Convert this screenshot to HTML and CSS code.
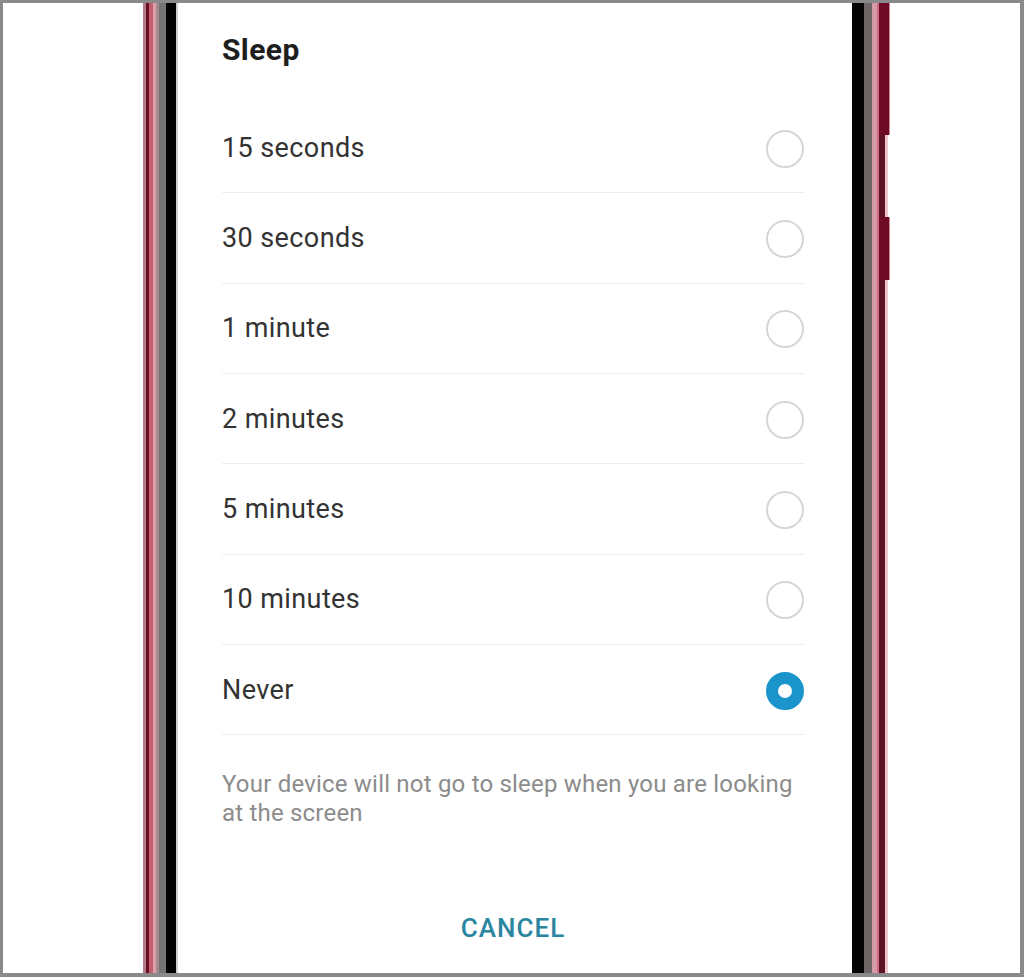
FILE: index.html
```html
<!DOCTYPE html>
<html lang="en">
<head>
<meta charset="utf-8">
<title>Sleep</title>
<link rel="stylesheet" href="styles.css">
</head>
<body>
<div class="frame">
  <div class="margin-left"></div>
  <div class="bezel-left"></div>
  <main class="screen">
    <h1 class="title">Sleep</h1>
    <ul class="options">
      <li class="option"><span class="label">15 seconds</span><span class="radio"></span></li>
      <li class="option"><span class="label">30 seconds</span><span class="radio"></span></li>
      <li class="option"><span class="label">1 minute</span><span class="radio"></span></li>
      <li class="option"><span class="label">2 minutes</span><span class="radio"></span></li>
      <li class="option"><span class="label">5 minutes</span><span class="radio"></span></li>
      <li class="option"><span class="label">10 minutes</span><span class="radio"></span></li>
      <li class="option"><span class="label">Never</span><span class="radio checked"></span></li>
    </ul>
    <p class="note">Your device will not go to sleep when you are looking at the screen</p>
    <div class="actions"><button class="cancel" type="button">CANCEL</button></div>
  </main>
  <div class="bezel-right">
    <div class="band band-black"></div>
    <div class="band band-gray"></div>
    <div class="band band-pink"></div>
    <div class="rail">
      <div class="rail-seg key" style="height:132px"></div>
      <div class="rail-seg plain" style="height:82px"></div>
      <div class="rail-seg key" style="height:63px"></div>
      <div class="rail-seg plain rest"></div>
    </div>
  </div>
  <div class="margin-right"></div>
</div>
</body>
</html>
```

FILE: styles.css
```css
* { box-sizing: border-box; }

html, body {
  margin: 0;
  padding: 0;
  width: 1024px;
  height: 977px;
  overflow: hidden;
  background: #ffffff;
  font-family: Roboto, "Noto Sans", "Liberation Sans", sans-serif;
}

/* outer picture border */
.frame {
  display: flex;
  width: 1024px;
  height: 977px;
  border-style: solid;
  border-color: #8a8a8a;
  border-width: 3px 4px 4px 3px;
  background: #ffffff;
}

.margin-left { width: 140px; flex: none; }
.margin-right { flex: 1; }

/* phone body, left edge */
.bezel-left {
  width: 35px;
  flex: none;
  background: linear-gradient(to right,
    #b27a85 0, #b27a85 3px,
    #6a0c22 3px, #6a0c22 6px,
    #c4606f 6px, #c4606f 10px,
    #dba2ab 10px, #dba2ab 13px,
    #a48b8e 13px, #a48b8e 16px,
    #747474 16px, #747474 23px,
    #030303 23px, #030303 33px,
    #cfcfcf 33px, #cfcfcf 35px);
}

/* phone body, right edge with side keys */
.bezel-right {
  width: 38px;
  flex: none;
  display: flex;
}
.band { height: 100%; }
.band-black { width: 12px; background: #040404; }
.band-gray { width: 8px; background: #6e6666; }
.band-pink {
  width: 7px;
  background: linear-gradient(to right, #d49aa5 0, #d49aa5 5px, #cf6a84 5px);
}
.rail { width: 11px; display: flex; flex-direction: column; }
.rail-seg { width: 100%; flex: none; }
.rail-seg.rest { flex: 1; }
.rail-seg.key {
  background: linear-gradient(to right, #6e0a24 0, #6e0a24 10px, #c98a98 10px);
}
.rail-seg.plain {
  background: linear-gradient(to right, #5e1226 0, #5e1226 6px, #f1c6cf 6px, #f1c6cf 9px, #ffffff 9px);
}

/* dialog screen */
.screen {
  width: 674px;
  flex: none;
  padding: 0 48px 0 44px;
  background: #ffffff;
}

.title {
  margin: 0;
  padding-top: 29px;
  height: 100px;
  font-size: 30px;
  line-height: 36px;
  font-weight: 700;
  color: #1e1e1e;
  letter-spacing: 0.4px;
}

.options {
  list-style: none;
  margin: 0;
  padding: 0;
}

.option {
  display: flex;
  align-items: center;
  justify-content: space-between;
  height: 90.33px;
  border-bottom: 1px solid #eeeeee;
}

.label {
  font-size: 27px;
  line-height: 36px;
  color: #333333;
  letter-spacing: 0.4px;
}

.radio {
  width: 38px;
  height: 38px;
  border-radius: 50%;
  border: 2px solid #d6d6d6;
  flex: none;
  margin-top: 2px;
}
.radio.checked {
  border: 12px solid #1b94cc;
}

.note {
  margin: 0;
  padding-top: 35px;
  font-size: 24px;
  line-height: 29px;
  color: #8c8c8c;
  letter-spacing: 0.2px;
}

.actions {
  display: flex;
  justify-content: center;
  padding-top: 84px;
}

.cancel {
  border: 0;
  background: none;
  padding: 0;
  font-family: inherit;
  font-size: 26px;
  line-height: 32px;
  font-weight: 500;
  letter-spacing: 1px;
  color: #2a86a0;
}
```
